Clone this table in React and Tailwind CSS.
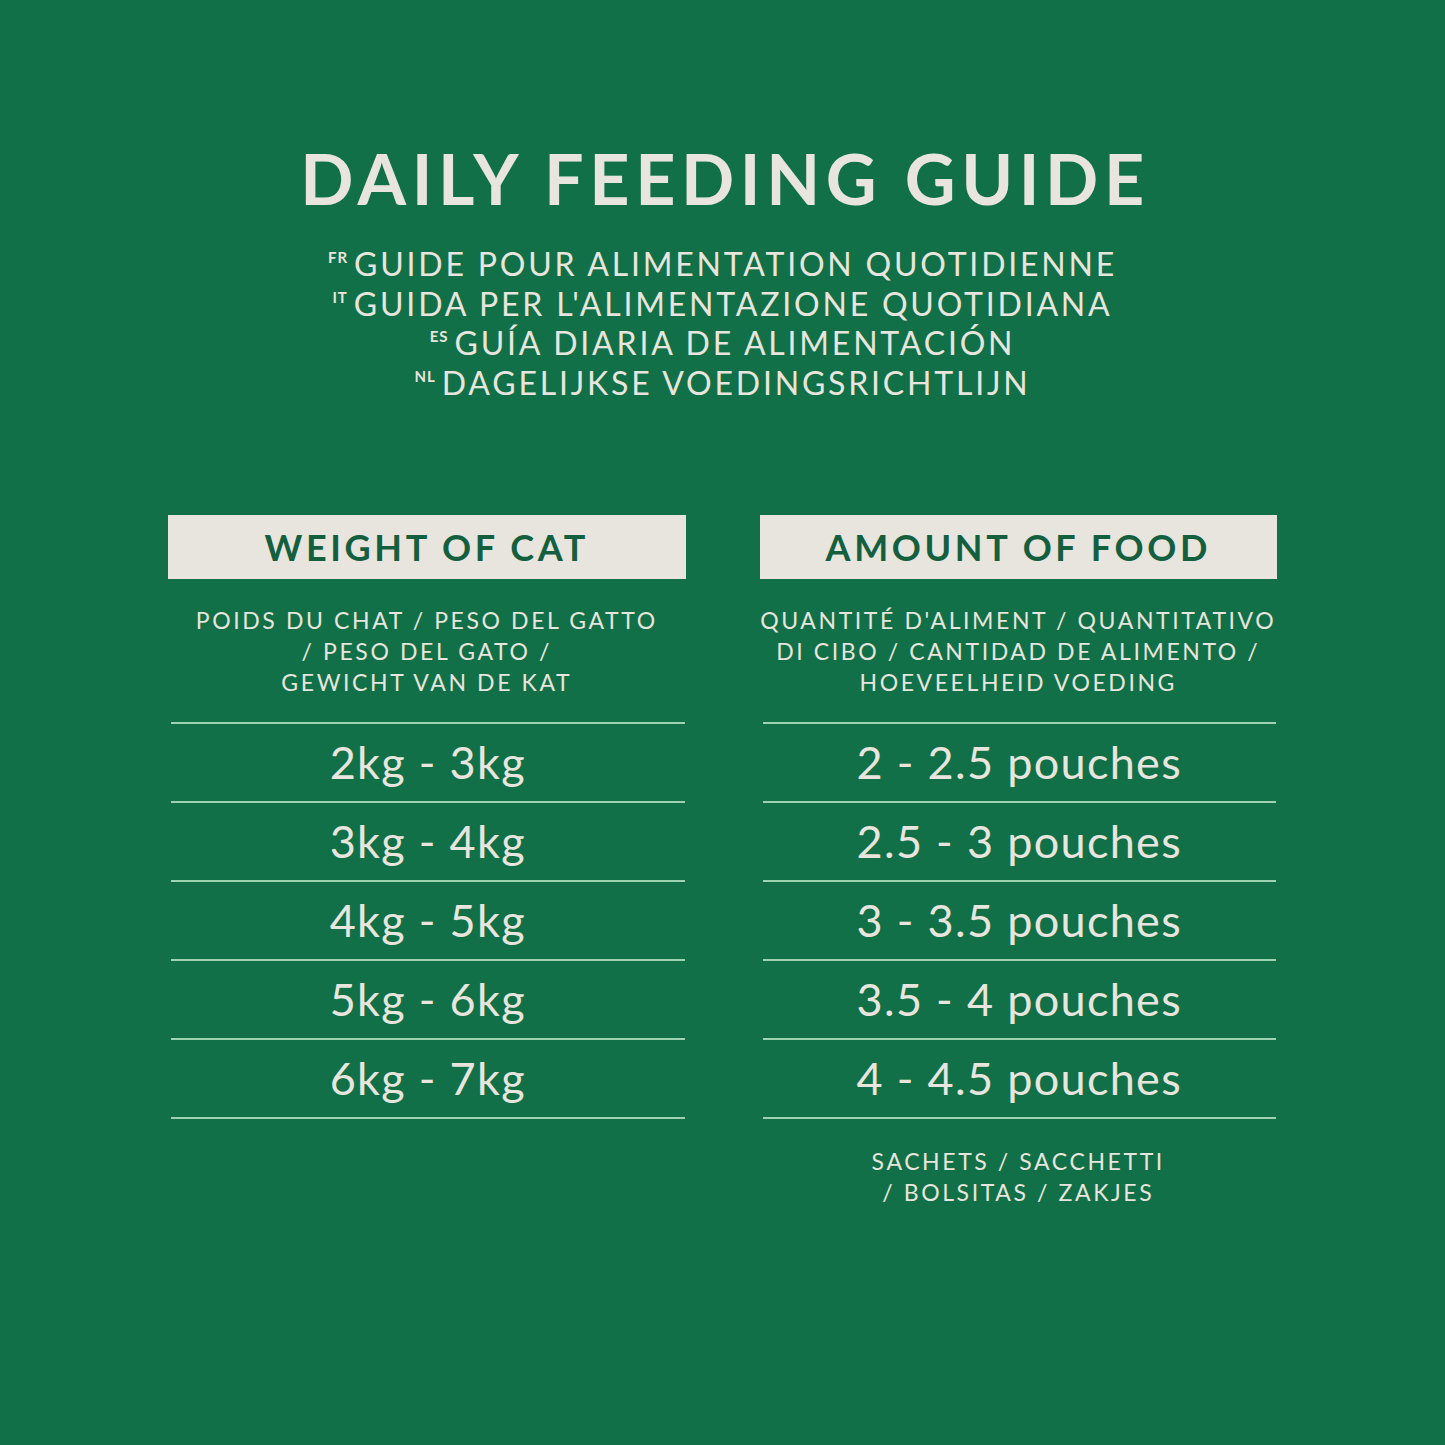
import React from "react";

const cream = "text-[#e8e5de]";

function Sub({ code, text }) {
  return (
    <div className="flex items-start justify-center h-[39.5px]">
      <span className="text-[15px] font-bold tracking-[1px] leading-none mt-[6px] mr-[6px]">{code}</span>
      <span className="text-[32px] leading-[39.5px] tracking-[2.8px] font-normal">{text}</span>
    </div>
  );
}

function Column({ title, subLines, rows, footer }) {
  return (
    <div className="flex flex-col">
      <div className="h-[64px] bg-[#e8e5de] flex items-center justify-center">
        <span className="text-[#145f3e] text-[36px] font-bold tracking-[3.6px] leading-none">{title}</span>
      </div>
      <div className="h-[143px] flex flex-col items-center justify-center text-[23px] tracking-[2.6px] leading-[31px] pt-[1px] whitespace-nowrap">
        {subLines.map((l) => (
          <div key={l}>{l}</div>
        ))}
      </div>
      <div className="ml-[3px] mr-[1px] border-b-2 border-[#9dd2b2]">
        {rows.map((r) => (
          <div key={r} className="h-[79px] border-t-2 border-[#9dd2b2] flex items-center justify-center text-[45px] tracking-[1.3px] leading-none">
            {r}
          </div>
        ))}
      </div>
      {footer && (
        <div className="mt-[27px] flex flex-col items-center text-[23px] tracking-[2.6px] leading-[31px] whitespace-nowrap">
          {footer.map((l) => (
            <div key={l}>{l}</div>
          ))}
        </div>
      )}
    </div>
  );
}

export default function App() {
  return (
    <div
      className={`w-[1445px] h-[1445px] bg-[#117047] ${cream} flex flex-col items-center`}
      style={{ fontFamily: "Lato, 'Open Sans', sans-serif" }}
    >
      <h1 className="mt-[138px] text-[70px] font-bold tracking-[5.6px] leading-[80px] pl-[5px]">DAILY FEEDING GUIDE</h1>
      <div className="mt-[26px] flex flex-col items-center">
        <Sub code="FR" text="GUIDE POUR ALIMENTATION QUOTIDIENNE" />
        <Sub code="IT" text="GUIDA PER L'ALIMENTAZIONE QUOTIDIANA" />
        <Sub code="ES" text="GUÍA DIARIA DE ALIMENTACIÓN" />
        <Sub code="NL" text="DAGELIJKSE VOEDINGSRICHTLIJN" />
      </div>
      <div className="mt-[113px] w-[1109px] grid grid-cols-2 gap-[74px]">
        <Column
          title="WEIGHT OF CAT"
          subLines={["POIDS DU CHAT / PESO DEL GATTO", "/ PESO DEL GATO /", "GEWICHT VAN DE KAT"]}
          rows={["2kg - 3kg", "3kg - 4kg", "4kg - 5kg", "5kg - 6kg", "6kg - 7kg"]}
        />
        <Column
          title="AMOUNT OF FOOD"
          subLines={["QUANTITÉ D'ALIMENT / QUANTITATIVO", "DI CIBO / CANTIDAD DE ALIMENTO /", "HOEVEELHEID VOEDING"]}
          rows={["2 - 2.5 pouches", "2.5 - 3 pouches", "3 - 3.5 pouches", "3.5 - 4 pouches", "4 - 4.5 pouches"]}
          footer={["SACHETS / SACCHETTI", "/ BOLSITAS / ZAKJES"]}
        />
      </div>
    </div>
  );
}
